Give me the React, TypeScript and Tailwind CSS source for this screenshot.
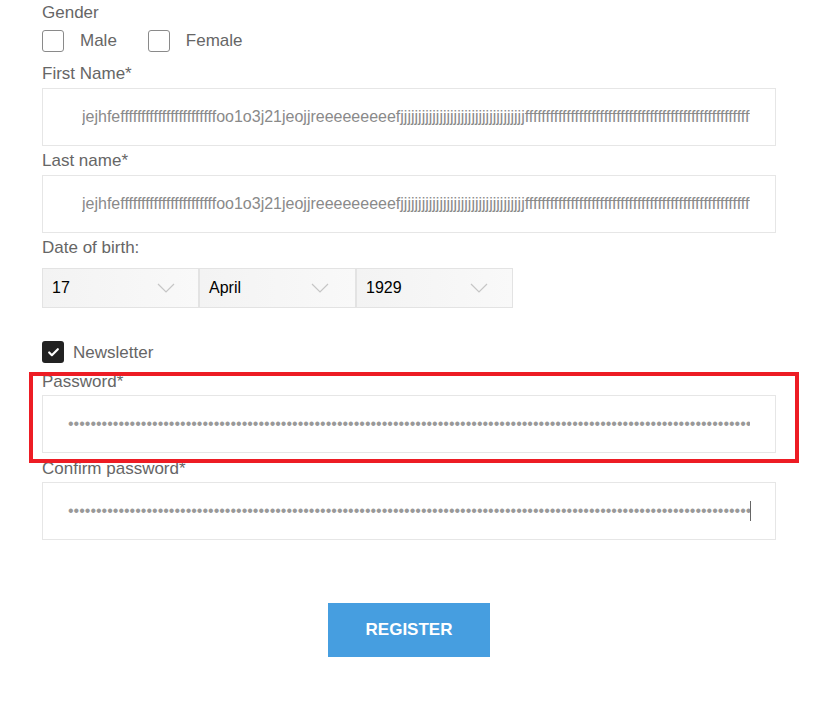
import React from 'react';
import { Check } from 'lucide-react';

const nameValue =
  'jejhfe' +
  'f'.repeat(23) +
  'oo1o3j21jeojjreeeeeeeeef' +
  'j'.repeat(35) +
  'f'.repeat(80);

const passwordValue = 'a'.repeat(170);

const Box: React.FC<{ checked?: boolean }> = ({ checked }) =>
  checked ? (
    <span className="flex h-[22px] w-[22px] items-center justify-center rounded-[3px] bg-[#222]">
      <Check className="h-[13px] w-[13px] text-white" strokeWidth={4} />
    </span>
  ) : (
    <span className="block h-[22px] w-[22px] rounded-[3px] border border-[#8a8a8a] bg-white" />
  );

const Chevron: React.FC = () => (
  <svg width="18" height="10" viewBox="0 0 18 10" className="text-[#c6c6c6]">
    <path d="M1 1 L9 9 L17 1" fill="none" stroke="currentColor" strokeWidth="1.2" />
  </svg>
);

const Select: React.FC<{ value: string; chevronRight: string }> = ({ value, chevronRight }) => (
  <div className="flex h-[40px] w-[157px] items-center justify-between border border-[#e3e3e3] bg-gradient-to-r from-[#f3f3f3] to-[#f9f9f9] pl-[9px]">
    <span className="text-[16px] text-black">{value}</span>
    <span className={chevronRight}>
      <Chevron />
    </span>
  </div>
);

export default function App() {
  return (
    <div className="relative min-h-[715px] w-full bg-white font-['Liberation_Sans',Arial,sans-serif] text-[17px] leading-[20px] text-[#666]">
      <form className="flex w-[776px] flex-col pl-[42px] pt-[3px]">
        {/* Gender */}
        <div>Gender</div>
        <div className="mt-[6px] flex h-[23px] items-center">
          <Box />
          <span className="ml-[16px] pt-[1px]">Male</span>
          <span className="ml-[31px]">
            <Box />
          </span>
          <span className="ml-[16px] pt-[1px]">Female</span>
        </div>

        {/* Names */}
        <label className="mt-[12px] block">First Name*</label>
        <input
          readOnly
          value={nameValue}
          className="mt-[4px] h-[58px] w-full border border-[#e6e6e6] bg-white pl-[39px] pr-[25px] text-[16px] text-[#8a8a8a] outline-none"
        />
        <label className="mt-[5px] block">Last name*</label>
        <input
          readOnly
          value={nameValue}
          className="mt-[4px] h-[58px] w-full border border-[#e6e6e6] bg-white pl-[39px] pr-[25px] text-[16px] text-[#8a8a8a] outline-none"
        />

        {/* Date of birth */}
        <div className="mt-[5px]">Date of birth:</div>
        <div className="mt-[10px] flex">
          <Select value="17" chevronRight="mr-[23px]" />
          <Select value="April" chevronRight="mr-[26px]" />
          <Select value="1929" chevronRight="mr-[24px]" />
        </div>

        {/* Newsletter */}
        <div className="mt-[33px] flex h-[22px] items-center">
          <Box checked />
          <span className="ml-[9px] pt-[2px]">Newsletter</span>
        </div>

        {/* Passwords */}
        <label className="mt-[9px] block">Password*</label>
        <input
          readOnly
          type="password"
          value={passwordValue}
          className="mt-[3px] h-[58px] w-full border border-[#e6e6e6] bg-white pl-[25px] pr-[25px] text-[16px] text-[#999] outline-none"
        />
        <label className="mt-[6px] block">Confirm password*</label>
        <div className="relative mt-[3px]">
          <input
            readOnly
            type="password"
            value={passwordValue}
            className="h-[58px] w-full border border-[#e6e6e6] bg-white pl-[25px] pr-[25px] text-[16px] text-[#999] outline-none"
          />
          <span className="absolute right-[25px] top-[19px] h-[20px] w-px bg-[#666]" />
        </div>

        <div className="mt-[63px] flex justify-center">
          <button
            type="button"
            className="flex h-[54px] w-[162px] items-center justify-center bg-[#469ee0] text-[17px] font-bold text-white"
          >
            REGISTER
          </button>
        </div>
      </form>

      {/* Highlight annotation */}
      <div className="pointer-events-none absolute left-[29px] top-[372px] h-[91px] w-[770px] border-4 border-[#ed1c24]" />
    </div>
  );
}
